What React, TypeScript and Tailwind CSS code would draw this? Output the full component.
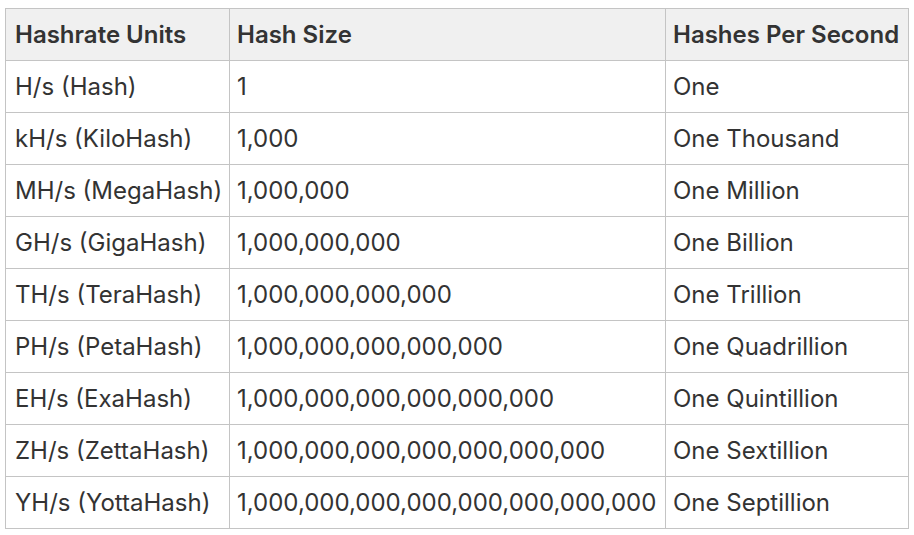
const rows: [string, string, string][] = [
  ["H/s (Hash)", "1", "One"],
  ["kH/s (KiloHash)", "1,000", "One Thousand"],
  ["MH/s (MegaHash)", "1,000,000", "One Million"],
  ["GH/s (GigaHash)", "1,000,000,000", "One Billion"],
  ["TH/s (TeraHash)", "1,000,000,000,000", "One Trillion"],
  ["PH/s (PetaHash)", "1,000,000,000,000,000", "One Quadrillion"],
  ["EH/s (ExaHash)", "1,000,000,000,000,000,000", "One Quintillion"],
  ["ZH/s (ZettaHash)", "1,000,000,000,000,000,000,000", "One Sextillion"],
  ["YH/s (YottaHash)", "1,000,000,000,000,000,000,000,000", "One Septillion"],
];

export default function App() {
  return (
    <div className="min-h-screen bg-white pl-[5px] pt-[8px] font-['Inter',sans-serif] text-[24px] text-[#333]">
      <table className="w-[904px] table-fixed border-collapse">
        <colgroup>
          <col className="w-[224px]" />
          <col className="w-[436px]" />
          <col />
        </colgroup>
        <thead>
          <tr className="h-[52px] bg-[#f0f0f0]">
            <th className="border border-[#c4c4c4] px-[9px] text-left font-semibold">Hashrate Units</th>
            <th className="border border-[#c4c4c4] px-[7px] text-left font-semibold">Hash Size</th>
            <th className="border border-[#c4c4c4] px-[7px] text-left font-semibold">Hashes Per Second</th>
          </tr>
        </thead>
        <tbody>
          {rows.map(([unit, size, per]) => (
            <tr key={unit} className="h-[52px]">
              <td className="whitespace-nowrap border border-[#c4c4c4] px-[9px]">{unit}</td>
              <td className="whitespace-nowrap border border-[#c4c4c4] px-[7px]">{size}</td>
              <td className="whitespace-nowrap border border-[#c4c4c4] px-[7px]">{per}</td>
            </tr>
          ))}
        </tbody>
      </table>
    </div>
  );
}
